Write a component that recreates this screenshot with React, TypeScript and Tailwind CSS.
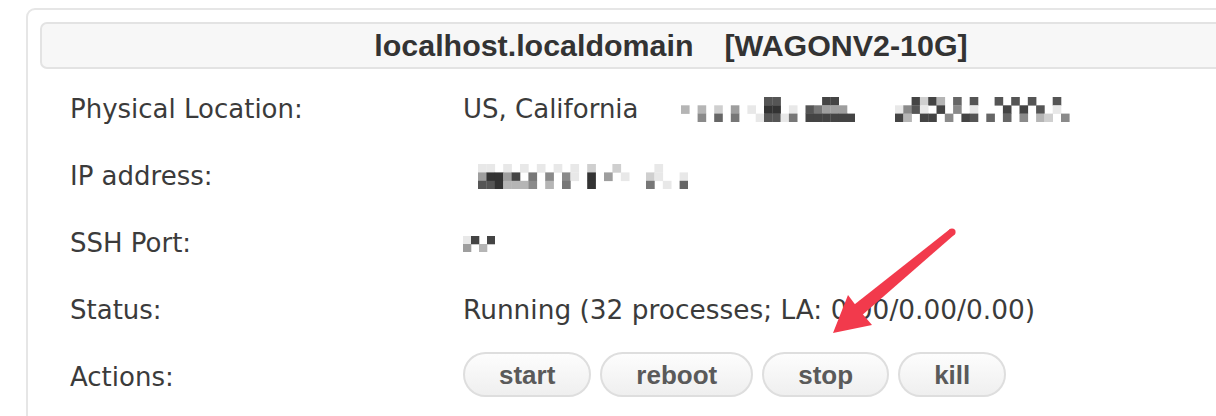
const sans = { fontFamily: '"DejaVu Sans", Verdana, sans-serif' };
const arial = { fontFamily: '"Liberation Sans", Arial, sans-serif' };

const shades: Record<string, string> = {
  "0": "#333333",
  "1": "#444444",
  "2": "#555555",
  "3": "#666666",
  "4": "#777777",
  "5": "#8a8a8a",
  "6": "#9e9e9e",
  "7": "#b5b5b5",
  "8": "#cfcfcf",
  "9": "#e8e8e8",
};

// pixelated (redacted) text
function Mosaic({ rows, cell = 8.3 }: { rows: string[]; cell?: number }) {
  const cols = Math.max(...rows.map((r) => r.length));
  return (
    <svg width={cols * cell} height={rows.length * cell} className="block">
      {rows.map((row, y) =>
        row.split("").map((c, x) =>
          c === "." ? null : (
            <rect key={`${x}-${y}`} x={x * cell} y={y * cell} width={cell + 0.3} height={cell + 0.3} fill={shades[c]} />
          )
        )
      )}
    </svg>
  );
}

function Row({ label, children }: { label: string; children: React.ReactNode }) {
  return (
    <div className="flex items-center h-[67px]">
      <div className="w-[423px] pl-[30px] pt-[3px] text-[26px] text-[#3b3b3b]" style={sans}>
        {label}
      </div>
      <div className="flex items-center text-[26px] text-[#3b3b3b]" style={sans}>
        {children}
      </div>
    </div>
  );
}

function ActionButton({ children }: { children: string }) {
  return (
    <button
      className="h-[45px] px-[34px] rounded-full border-2 border-[#dedede] bg-gradient-to-b from-[#fdfdfd] to-[#efefef] text-[26px] font-bold text-[#5a5a5a] leading-none"
      style={arial}
    >
      {children}
    </button>
  );
}

export default function App() {
  return (
    <div className="relative w-[1216px] h-[416px] overflow-hidden bg-white">
      <div className="ml-[26px] mt-[8px] w-[1290px] rounded-[9px] border-2 border-[#e6e6e6] px-[12px] pt-[12px] pb-[40px]">
        <div
          className="h-[47px] rounded-[7px] border-2 border-[#e3e3e3] bg-[#f7f7f7] flex items-center justify-center text-[30.4px] font-bold text-[#333]"
          style={arial}
        >
          <span>localhost.localdomain</span>
          <span className="ml-[31px]">[WAGONV2-10G]</span>
        </div>
        <div className="mt-[5px]">
          <Row label="Physical Location:">
            <span className="pt-[3px]">US, California</span>
            <span className="ml-[42px] mt-[4px]">
              <Mosaic
                rows={[
                  "..........22.....11..",
                  "7.7.8.6.9.00.9.24666.",
                  "..5.3.4..92294.111111",
                ]}
              />
            </span>
            <span className="ml-[40px] mt-[4px]">
              <Mosaic
                rows={[
                  "..1817.3.2..2.2.2..2...",
                  "9529.1.5.9...1.1.2.9...",
                  "17.11.5.12.3.3.5.78.5..",
                ]}
              />
            </span>
          </Row>
          <Row label="IP address:">
            <span className="ml-[15px] mt-[4px]">
              <Mosaic
                cell={8.4}
                rows={[
                  "99.9.9.9.9.9.8..8....9...",
                  "60061.4.5.59.0.6.9..89..9",
                  "2207775.7.4..0......4.9.3",
                ]}
              />
            </span>
          </Row>
          <Row label="SSH Port:">
            <span className="mt-[4px]">
              <Mosaic cell={8} rows={["91.1", "6.7."]} />
            </span>
          </Row>
          <Row label="Status:">
            <span className="pt-[3px] text-[26.4px]">Running (32 processes; LA: 0.00/0.00/0.00)</span>
          </Row>
          <Row label="Actions:">
            <div className="flex items-center gap-[9px] -mt-[2px]">
              <ActionButton>start</ActionButton>
              <ActionButton>reboot</ActionButton>
              <ActionButton>stop</ActionButton>
              <ActionButton>kill</ActionButton>
            </div>
          </Row>
        </div>
      </div>
      {/* annotation arrow */}
      <svg className="absolute left-0 top-0 pointer-events-none" width="1216" height="416">
        <polygon points="949.7,229.3 954.3,234.7 860,317 850,308" fill="#f23a4c" />
        <circle cx="952" cy="232" r="3.6" fill="#f23a4c" />
        <polygon points="833,333 872,325 860,311 848,295" fill="#f23a4c" />
      </svg>
    </div>
  );
}
